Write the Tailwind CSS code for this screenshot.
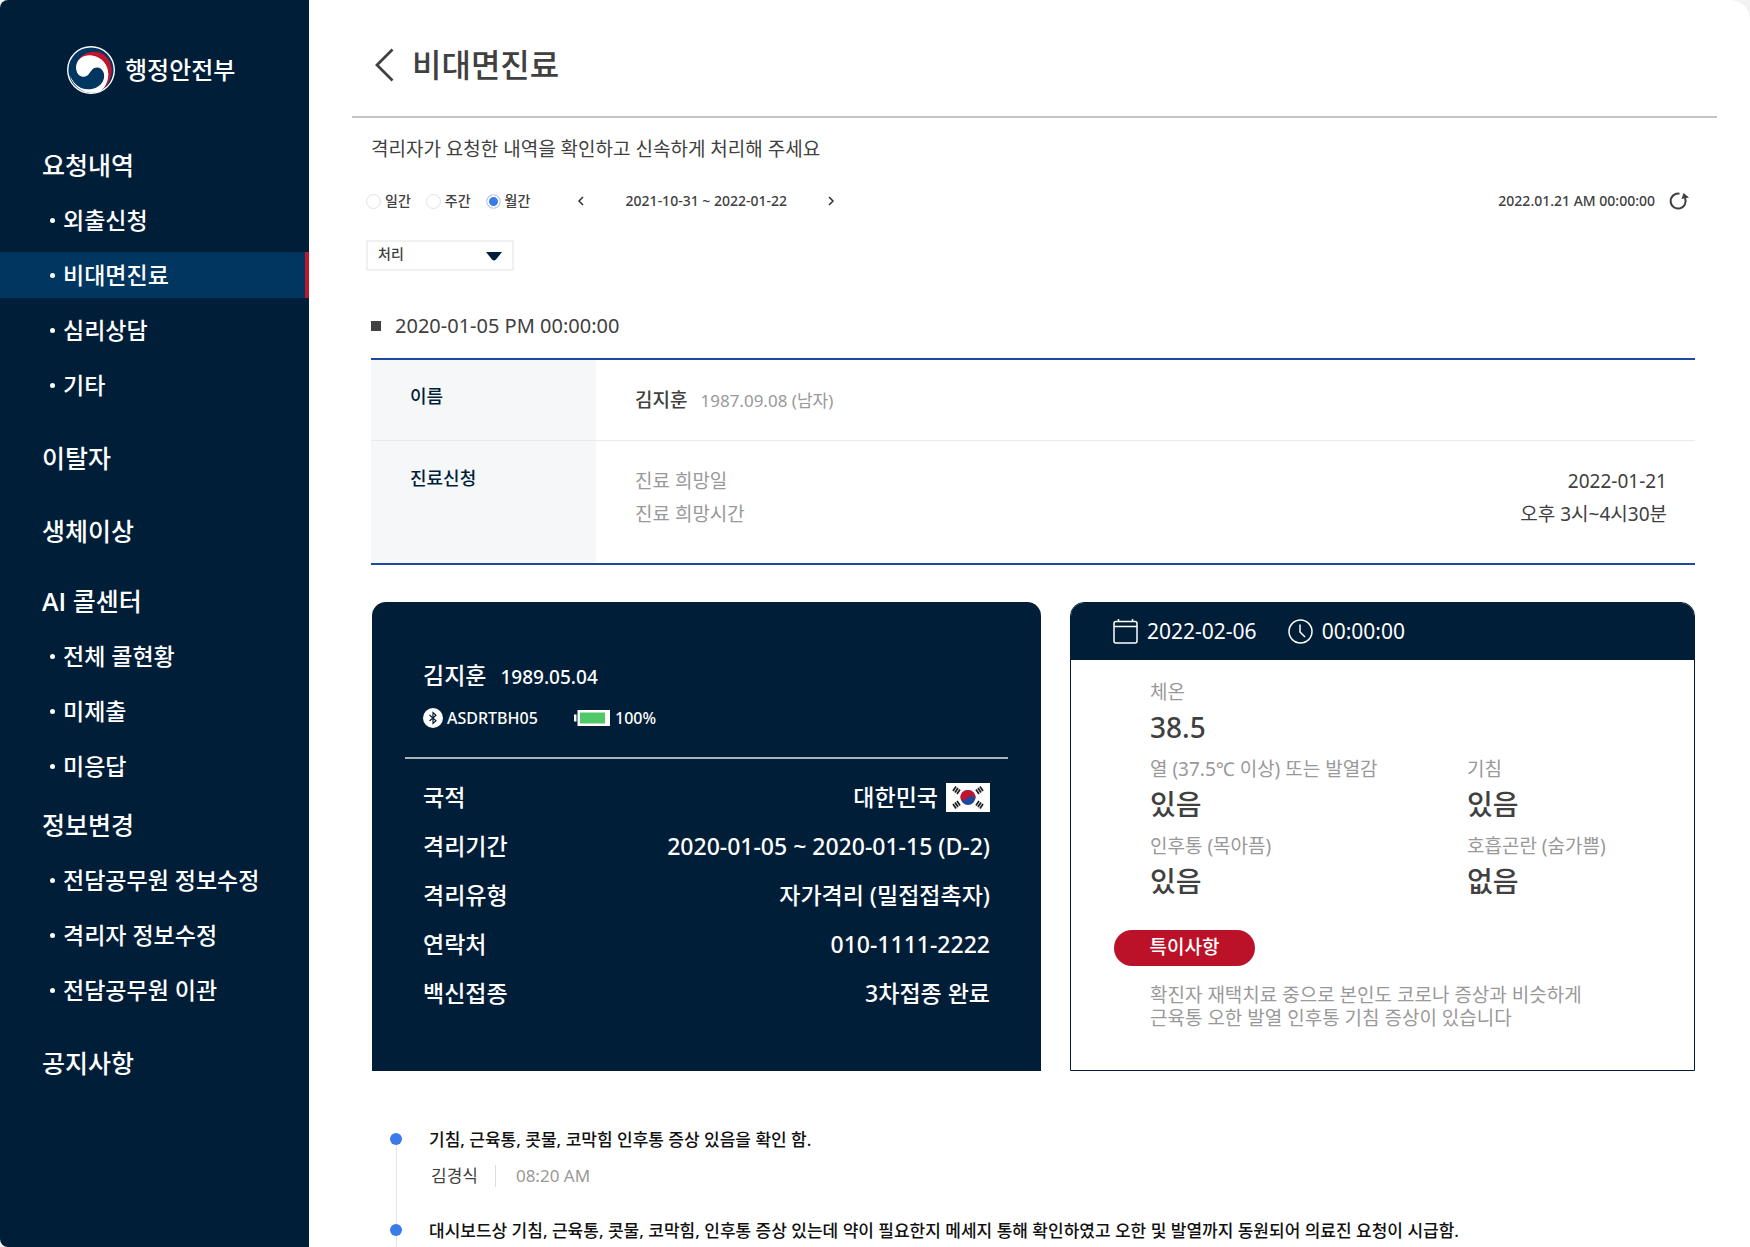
<!DOCTYPE html>
<html lang="ko">
<head>
<meta charset="utf-8">
<meta name="viewport" content="width=device-width, initial-scale=1">
<title>비대면진료 - 행정안전부</title>
<script src="https://cdn.jsdelivr.net/npm/@tailwindcss/browser@4"></script>
</head>
<body class="bg-[#f3f3f3] font-['Noto_Sans','Noto_Sans_CJK_KR',sans-serif] text-[#404040]">
<div class="flex min-h-screen overflow-hidden rounded-l-[8px] rounded-tr-[20px] bg-white">

  <aside class="w-[309px] shrink-0 bg-[#001e38] pt-[46px] text-white">
    <a href="#" class="ml-[67px] flex items-center gap-[10px]">
      <svg class="size-[48px]" viewBox="0 0 48 48" aria-hidden="true">
        <circle cx="24" cy="24" r="24" fill="#fff"/>
        <circle cx="24" cy="24" r="22.600" fill="#003660"/>
        <path d="M9.500 20C10 9 25 2 36 8C48 16 48 34 34 45C38 38 42 26 36 18C30 10 18 9 9.500 20Z" fill="#c0152f"/>
        <path d="M9 22C9 13 17 8.500 25 9.500C36 11 43 21 41 32C40 38 37 43 33 45.500C20 50 7 43 3 30C8 38 14 42 20 40L26 30C20 34 9 32 9 22Z" fill="#fff"/>
        <path d="M9 23C10 31 17 32.500 21 29C24 26 25 21.500 30 21.500C36 21.500 39 29 36 35C32 43 22 45 14 42C6 38 2 30 3 21Z" fill="#003660"/>
      </svg>
      <span class="text-[24px] leading-[36px] font-medium">행정안전부</span>
    </a>
    <nav class="mt-[48px] text-[23px] leading-[46px] font-medium">
      <a href="#" class="block pl-[42px] text-[25px]">요청내역</a>
      <ul class="mt-[9px] flex flex-col gap-[9px]">
        <li><a href="#" class="flex items-center gap-[8px] pl-[50px]"><i class="size-[5px] rounded-full bg-white"></i>외출신청</a></li>
        <li><a href="#" aria-current="page" class="flex items-center gap-[8px] border-r-4 border-[#c0152f] bg-[#003660] pl-[50px]"><i class="size-[5px] rounded-full bg-white"></i>비대면진료</a></li>
        <li><a href="#" class="flex items-center gap-[8px] pl-[50px]"><i class="size-[5px] rounded-full bg-white"></i>심리상담</a></li>
        <li><a href="#" class="flex items-center gap-[8px] pl-[50px]"><i class="size-[5px] rounded-full bg-white"></i>기타</a></li>
      </ul>
      <a href="#" class="mt-[27px] block pl-[42px] text-[25px]">이탈자</a>
      <a href="#" class="mt-[27px] block pl-[42px] text-[25px]">생체이상</a>
      <a href="#" class="mt-[24px] block pl-[42px] text-[25px]"><span class="font-['Open_Sans'] font-semibold">AI</span> 콜센터</a>
      <ul class="mt-[9px] flex flex-col gap-[9px]">
        <li><a href="#" class="flex items-center gap-[8px] pl-[50px]"><i class="size-[5px] rounded-full bg-white"></i>전체 콜현황</a></li>
        <li><a href="#" class="flex items-center gap-[8px] pl-[50px]"><i class="size-[5px] rounded-full bg-white"></i>미제출</a></li>
        <li><a href="#" class="flex items-center gap-[8px] pl-[50px]"><i class="size-[5px] rounded-full bg-white"></i>미응답</a></li>
      </ul>
      <a href="#" class="mt-[13px] block pl-[42px] text-[25px]">정보변경</a>
      <ul class="mt-[9px] flex flex-col gap-[9px]">
        <li><a href="#" class="flex items-center gap-[8px] pl-[50px]"><i class="size-[5px] rounded-full bg-white"></i>전담공무원 정보수정</a></li>
        <li><a href="#" class="flex items-center gap-[8px] pl-[50px]"><i class="size-[5px] rounded-full bg-white"></i>격리자 정보수정</a></li>
        <li><a href="#" class="flex items-center gap-[8px] pl-[50px]"><i class="size-[5px] rounded-full bg-white"></i>전담공무원 이관</a></li>
      </ul>
      <a href="#" class="mt-[27px] block pl-[42px] text-[25px]">공지사항</a>
    </nav>
  </aside>

  <main class="flex min-w-0 flex-1 flex-col pr-[33px] pl-[43px]">
    <header class="flex h-[118px] items-center gap-[18px] border-b-2 border-[#c4c4c4] pt-[14px] pl-[22px]">
      <button type="button" aria-label="뒤로">
        <svg class="h-[34px] w-[20px]" viewBox="0 0 20 34" fill="none" stroke="#404040" stroke-width="2.800"><path d="M18.500 1.500L3 17L18.500 32.500"/></svg>
      </button>
      <h1 class="text-[32px] leading-[48px] font-medium">비대면진료</h1>
    </header>

    <div class="flex flex-1 flex-col pr-[22px] pl-[19px]">
      <p class="mt-[17px] text-[19px] leading-[28px]">격리자가 요청한 내역을 확인하고 신속하게 처리해 주세요</p>

      <form class="-ml-[5px]">
        <div class="mt-[28px] flex items-center text-[14px] leading-[20px] font-medium">
          <label class="mr-[15px] flex items-center gap-[4px]"><input type="radio" name="range" class="size-[15px] appearance-none rounded-full border border-[#e2e2e2] checked:bg-[#3b7be8] checked:shadow-[inset_0_0_0_2px_#fff]">일간</label>
          <label class="mr-[15px] flex items-center gap-[4px]"><input type="radio" name="range" class="size-[15px] appearance-none rounded-full border border-[#e2e2e2] checked:bg-[#3b7be8] checked:shadow-[inset_0_0_0_2px_#fff]">주간</label>
          <label class="flex items-center gap-[4px]"><input type="radio" name="range" checked class="size-[15px] appearance-none rounded-full border border-[#e2e2e2] checked:bg-[#3b7be8] checked:shadow-[inset_0_0_0_2px_#fff]">월간</label>
          <button type="button" aria-label="이전" class="ml-[46px]"><svg class="size-[10px]" viewBox="0 0 10 10" fill="none" stroke="#303030" stroke-width="1.500"><path d="M7 1L3 5L7 9"/></svg></button>
          <span class="w-[240px] text-center">2021-10-31 ~ 2022-01-22</span>
          <button type="button" aria-label="다음"><svg class="size-[10px]" viewBox="0 0 10 10" fill="none" stroke="#303030" stroke-width="1.500"><path d="M3 1L7 5L3 9"/></svg></button>
          <span class="ml-auto">2022.01.21 AM 00:00:00</span>
          <button type="button" aria-label="새로고침" class="mr-[6px] ml-[14px]"><svg class="size-[20px]" viewBox="0 0 20 20" fill="none" stroke="#404040" stroke-width="2"><path d="M10.500 2.700A7.500 7.500 0 1 0 16 7"/><path d="M14.500 2L20 6.500L12.500 8Z" fill="#404040" stroke="none"/></svg></button>
        </div>
        <div class="relative mt-[29px] w-[148px]">
          <select aria-label="상태" class="block h-[31px] w-full appearance-none border-2 border-[#f0f0f0] bg-white pb-[3px] pl-[10px] text-[14px] leading-[20px] font-medium"><option>처리</option></select>
          <svg class="pointer-events-none absolute top-[12px] right-[12px] h-[9px] w-[16px]" viewBox="0 0 16 9"><path d="M0 0H16L10 7.500Q8 9.500 6 7.500Z" fill="#001e38"/></svg>
        </div>
      </form>

      <h2 class="mt-[41px] flex items-center gap-[14px] text-[20px] leading-[28px]"><i class="size-[10px] bg-[#404040]"></i>2020-01-05 PM 00:00:00</h2>

      <table class="mt-[18px] w-full border-y-2 border-[#1c4aa0] text-left align-top text-[19px] leading-[33px]">
        <tbody>
          <tr class="h-[81px] border-b border-[#e9e9e9] align-top">
            <th scope="row" class="w-[225px] bg-[#f6f7f9] pt-[20px] pl-[39px] text-[18px] font-medium text-[#001e38]">이름</th>
            <td colspan="2" class="pt-[24px] pl-[39px]"><span class="mr-[13px] font-medium">김지훈</span><span class="text-[17px] text-[#999]">1987.09.08 (남자)</span></td>
          </tr>
          <tr class="h-[124px] align-top">
            <th scope="row" class="bg-[#f6f7f9] pt-[21px] pl-[39px] text-[18px] font-medium text-[#001e38]">진료신청</th>
            <td class="pt-[24px] pl-[39px] text-[#999]">진료 희망일<br>진료 희망시간</td>
            <td class="pt-[24px] pr-[28px] text-right">2022-01-21<br>오후 3시~4시30분</td>
          </tr>
        </tbody>
      </table>

      <div class="mt-[37px] grid h-[469px] grid-cols-[669fr_625fr] gap-[29px] pl-px">
        <section class="rounded-t-[14px] bg-[#001e38] px-[33px] text-[23px] leading-[49px] font-medium text-white">
          <div class="mx-[18px] pt-[55px]">
            <p class="flex items-baseline gap-[14px] leading-[36px]">김지훈<span class="text-[19px]">1989.05.04</span></p>
            <p class="mt-[11px] flex items-center text-[16px] leading-[24px]">
              <svg class="mr-[4px] size-[20px]" viewBox="0 0 20 20" fill="none"><circle cx="10" cy="10" r="10" fill="#fff"/><path d="M6.500 7L13 12.800L10 15.500V4.500L13 7.200L6.500 13" stroke="#001e38" stroke-width="1.200"/></svg>
              <span class="w-[127px]">ASDRTBH05</span>
              <svg class="mr-[5px] h-[16px] w-[36px]" viewBox="0 0 36 16"><path d="M0 4.500H2.500V11.500H0ZM3.500 0H36V16H3.500Z" fill="#fff"/><path d="M6 2.500H31V13.500H6Z" fill="#50c868"/></svg>
              100%
            </p>
          </div>
          <dl class="mt-[27px] border-t-2 border-[#aab4c0] px-[18px] pt-[14px]">
            <div class="flex justify-between"><dt>국적</dt><dd class="flex items-center gap-[8px]">대한민국
              <svg class="h-[29px] w-[44px]" viewBox="0 0 44 29" role="img" aria-label="태극기"><path d="M0 0H44V29H0Z" fill="#fff"/><circle cx="22" cy="14.500" r="7.500" fill="#1c4aa0"/><path d="M15 17C13 10 18 7 22 7C27 7 30.500 12 29.300 16C28 12.500 24.500 12.500 22 14.500C20 16.500 17 18.500 15 17Z" fill="#c0152f"/><g stroke="#222" stroke-width="1.800"><path d="M7 8L10 3.500M9 9.500L12 5M11 11L14 6.500"/><path d="M33 11L30 6.500M35 9.500L32 5M37 8L34 3.500"/><path d="M7 21L10 25.500M9 19.500L12 24M11 18L14 22.500"/><path d="M33 18L30 22.500M35 19.500L32 24M37 21L34 25.500"/></g></svg></dd></div>
            <div class="flex justify-between"><dt>격리기간</dt><dd>2020-01-05 ~ 2020-01-15 (D-2)</dd></div>
            <div class="flex justify-between"><dt>격리유형</dt><dd>자가격리 (밀접접촉자)</dd></div>
            <div class="flex justify-between"><dt>연락처</dt><dd>010-1111-2222</dd></div>
            <div class="flex justify-between"><dt>백신접종</dt><dd>3차접종 완료</dd></div>
          </dl>
        </section>

        <section class="overflow-hidden rounded-t-[14px] border border-[#001e38]">
          <div class="flex h-[57px] items-center bg-[#001e38] pl-[42px] text-[21px] text-white">
            <svg class="mr-[9px] size-[25px]" viewBox="0 0 25 25" fill="none" stroke="#fff" stroke-width="1.500"><rect x="1" y="2.500" width="23" height="21.500" rx="2"/><path d="M1 7.500H24M5.500 0V3M19.500 0V3"/></svg>
            2022-02-06
            <svg class="mr-[9px] ml-[31px] size-[25px]" viewBox="0 0 25 25" fill="none" stroke="#fff" stroke-width="1.500"><circle cx="12.500" cy="12.500" r="11.500"/><path d="M12 5.500V13L17 18"/></svg>
            00:00:00
          </div>
          <dl class="grid grid-cols-[317px_1fr] gap-y-[7px] pt-[16px] pl-[79px] [&_dd]:text-[28px] [&_dd]:leading-[38px] [&_dd]:font-medium [&_dt]:text-[19px] [&_dt]:leading-[32px] [&_dt]:text-[#999]">
            <div class="col-span-2"><dt>체온</dt><dd>38.5</dd></div>
            <div><dt>열 (37.5℃ 이상) 또는 발열감</dt><dd>있음</dd></div>
            <div><dt>기침</dt><dd>있음</dd></div>
            <div><dt>인후통 (목아픔)</dt><dd>있음</dd></div>
            <div><dt>호흡곤란 (숨가쁨)</dt><dd>없음</dd></div>
          </dl>
          <h3 class="mt-[30px] ml-[43px] h-[36px] w-[141px] rounded-full bg-[#bb1229] text-center text-[19px] leading-[34px] font-medium text-white">특이사항</h3>
          <p class="mt-[18px] ml-[79px] text-[19px] leading-[23px] text-[#999]">확진자 재택치료 중으로 본인도 코로나 증상과 비슷하게<br>근육통 오한 발열 인후통 기침 증상이 있습니다</p>
        </section>
      </div>

      <ol class="mt-[55px] ml-[19px] flex flex-1 flex-col text-[17px] leading-[28px]">
        <li class="flex gap-[27px]">
          <div class="-mb-[7px] flex w-[12px] shrink-0 flex-col items-center pt-[7px]"><i class="size-[12px] rounded-full bg-[#3b7be8]"></i><i class="w-px flex-1 bg-[#e4e4e4]"></i></div>
          <div class="pb-[27px]">
            <p class="font-medium text-[#111]">기침, 근육통, 콧물, 코막힘 인후통 증상 있음을 확인 함.</p>
            <p class="mt-[8px] flex items-center pl-[2px]">김경식<span class="mr-[20px] ml-[17px] h-[22px] w-px bg-[#ddd]"></span><time class="text-[#999]">08:20 AM</time></p>
          </div>
        </li>
        <li class="flex flex-1 gap-[27px]">
          <div class="flex w-[12px] shrink-0 flex-col items-center pt-[7px]"><i class="size-[12px] rounded-full bg-[#3b7be8]"></i><i class="w-px flex-1 bg-[#e4e4e4]"></i></div>
          <p class="font-medium text-[#111]">대시보드상 기침, 근육통, 콧물, 코막힘, 인후통 증상 있는데 약이 필요한지 메세지 통해 확인하였고 오한 및 발열까지 동원되어 의료진 요청이 시급함.</p>
        </li>
      </ol>
    </div>
  </main>
</div>
</body>
</html>
